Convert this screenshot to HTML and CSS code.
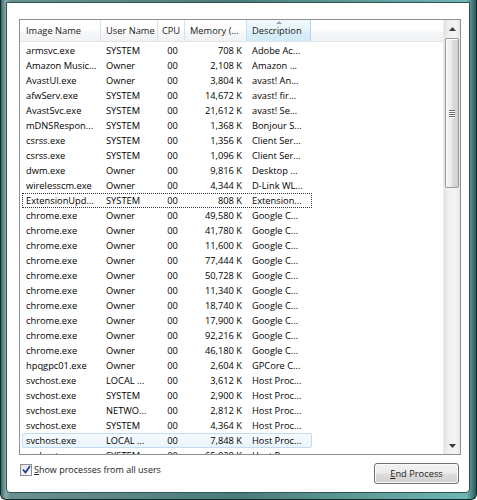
FILE: index.html
```html
<!DOCTYPE html>
<html>
<head>
<meta charset="utf-8">
<link rel="stylesheet" href="styles.css">
</head>
<body>
<div class="frame">
  <div class="client">
    <div class="listbox">
      <div class="list-main">
        <div class="header">
          <div class="hcell c1">Image Name</div>
          <div class="hcell c2">User Name</div>
          <div class="hcell c3">CPU</div>
          <div class="hcell c4">Memory (...</div>
          <div class="hcell c5 sorted"><span class="sort-arrow"></span>Description</div>
          <div class="hcell rest"></div>
        </div>
        <div class="rows">
          <div class="row"><span class="c1">armsvc.exe</span><span class="c2">SYSTEM</span><span class="c3">00</span><span class="c4">708 K</span><span class="c5">Adobe Ac...</span></div>
          <div class="row"><span class="c1">Amazon Music...</span><span class="c2">Owner</span><span class="c3">00</span><span class="c4">2,108 K</span><span class="c5">Amazon ...</span></div>
          <div class="row"><span class="c1">AvastUI.exe</span><span class="c2">Owner</span><span class="c3">00</span><span class="c4">3,804 K</span><span class="c5">avast! An...</span></div>
          <div class="row"><span class="c1">afwServ.exe</span><span class="c2">SYSTEM</span><span class="c3">00</span><span class="c4">14,672 K</span><span class="c5">avast! fir...</span></div>
          <div class="row"><span class="c1">AvastSvc.exe</span><span class="c2">SYSTEM</span><span class="c3">00</span><span class="c4">21,612 K</span><span class="c5">avast! Se...</span></div>
          <div class="row"><span class="c1">mDNSRespon...</span><span class="c2">SYSTEM</span><span class="c3">00</span><span class="c4">1,368 K</span><span class="c5">Bonjour S...</span></div>
          <div class="row"><span class="c1">csrss.exe</span><span class="c2">SYSTEM</span><span class="c3">00</span><span class="c4">1,356 K</span><span class="c5">Client Ser...</span></div>
          <div class="row"><span class="c1">csrss.exe</span><span class="c2">SYSTEM</span><span class="c3">00</span><span class="c4">1,096 K</span><span class="c5">Client Ser...</span></div>
          <div class="row"><span class="c1">dwm.exe</span><span class="c2">Owner</span><span class="c3">00</span><span class="c4">9,816 K</span><span class="c5">Desktop ...</span></div>
          <div class="row"><span class="c1">wirelesscm.exe</span><span class="c2">Owner</span><span class="c3">00</span><span class="c4">4,344 K</span><span class="c5">D-Link WL...</span></div>
          <div class="row focused"><span class="c1">ExtensionUpd...</span><span class="c2">SYSTEM</span><span class="c3">00</span><span class="c4">808 K</span><span class="c5">Extension...</span></div>
          <div class="row"><span class="c1">chrome.exe</span><span class="c2">Owner</span><span class="c3">00</span><span class="c4">49,580 K</span><span class="c5">Google C...</span></div>
          <div class="row"><span class="c1">chrome.exe</span><span class="c2">Owner</span><span class="c3">00</span><span class="c4">41,780 K</span><span class="c5">Google C...</span></div>
          <div class="row"><span class="c1">chrome.exe</span><span class="c2">Owner</span><span class="c3">00</span><span class="c4">11,600 K</span><span class="c5">Google C...</span></div>
          <div class="row"><span class="c1">chrome.exe</span><span class="c2">Owner</span><span class="c3">00</span><span class="c4">77,444 K</span><span class="c5">Google C...</span></div>
          <div class="row"><span class="c1">chrome.exe</span><span class="c2">Owner</span><span class="c3">00</span><span class="c4">50,728 K</span><span class="c5">Google C...</span></div>
          <div class="row"><span class="c1">chrome.exe</span><span class="c2">Owner</span><span class="c3">00</span><span class="c4">11,340 K</span><span class="c5">Google C...</span></div>
          <div class="row"><span class="c1">chrome.exe</span><span class="c2">Owner</span><span class="c3">00</span><span class="c4">18,740 K</span><span class="c5">Google C...</span></div>
          <div class="row"><span class="c1">chrome.exe</span><span class="c2">Owner</span><span class="c3">00</span><span class="c4">17,900 K</span><span class="c5">Google C...</span></div>
          <div class="row"><span class="c1">chrome.exe</span><span class="c2">Owner</span><span class="c3">00</span><span class="c4">92,216 K</span><span class="c5">Google C...</span></div>
          <div class="row"><span class="c1">chrome.exe</span><span class="c2">Owner</span><span class="c3">00</span><span class="c4">46,180 K</span><span class="c5">Google C...</span></div>
          <div class="row"><span class="c1">hpqgpc01.exe</span><span class="c2">Owner</span><span class="c3">00</span><span class="c4">2,604 K</span><span class="c5">GPCore C...</span></div>
          <div class="row"><span class="c1">svchost.exe</span><span class="c2">LOCAL ...</span><span class="c3">00</span><span class="c4">3,612 K</span><span class="c5">Host Proc...</span></div>
          <div class="row"><span class="c1">svchost.exe</span><span class="c2">SYSTEM</span><span class="c3">00</span><span class="c4">2,900 K</span><span class="c5">Host Proc...</span></div>
          <div class="row"><span class="c1">svchost.exe</span><span class="c2">NETWO...</span><span class="c3">00</span><span class="c4">2,812 K</span><span class="c5">Host Proc...</span></div>
          <div class="row"><span class="c1">svchost.exe</span><span class="c2">SYSTEM</span><span class="c3">00</span><span class="c4">4,364 K</span><span class="c5">Host Proc...</span></div>
          <div class="row hover"><span class="c1">svchost.exe</span><span class="c2">LOCAL ...</span><span class="c3">00</span><span class="c4">7,848 K</span><span class="c5">Host Proc...</span></div>
          <div class="row"><span class="c1">svchost.exe</span><span class="c2">SYSTEM</span><span class="c3">00</span><span class="c4">65,028 K</span><span class="c5">Host Proc...</span></div>
        </div>
      </div>
      <div class="scrollbar">
        <div class="sb-btn"><svg width="7" height="4" viewBox="0 0 7 4"><path d="M0 4 L3.5 0 L7 4 Z" fill="#3c3c3c"/></svg></div>
        <div class="sb-track">
          <div class="sb-thumb"><span class="grip"></span><span class="grip"></span><span class="grip"></span><span class="grip"></span></div>
        </div>
        <div class="sb-btn"><svg width="7" height="4" viewBox="0 0 7 4"><path d="M0 0 L3.5 4 L7 0 Z" fill="#3c3c3c"/></svg></div>
      </div>
    </div>
    <div class="bottom">
      <label class="check"><span class="box"><svg width="9" height="9" viewBox="0 0 9 9"><path d="M1 4.5 L3.5 7.5 L8 1" fill="none" stroke="#2a3f8c" stroke-width="1.8"/></svg></span><span><u>S</u>how processes from all users</span></label>
      <button class="btn"><u>E</u>nd Process</button>
    </div>
  </div>
</div>
</body>
</html>
```

FILE: styles.css
```css
* { box-sizing: border-box; }
html, body { margin: 0; padding: 0; }
body {
  width: 477px;
  height: 500px;
  overflow: hidden;
  font-family: "Open Sans", "Noto Sans", sans-serif;
  font-size: 9.3px;
  color: #000;
}
.frame {
  width: 477px;
  height: 500px;
  padding: 2px 6px 6px 5px;
  border: 1px solid #0e2a2c;
  border-top: none;
  background: linear-gradient(90deg, #3e6a6c 0%, #8aa9a8 1%, #6a8f8f 2%, #4a7b7a 50%, #6fb6b0 98%, #2b5a5c 100%);
  border-radius: 0 0 6px 6px;
}
.client {
  height: 100%;
  background: #fff;
  border: 1px solid #2d5355;
  border-radius: 0 0 4px 4px;
  padding: 16px 8px 0 12px;
}
.listbox {
  display: flex;
  width: 442px;
  height: 436px;
  border: 1px solid #8a9093;
  background: #fff;
}
.list-main {
  flex: 1;
  overflow: hidden;
  display: flex;
  flex-direction: column;
}
.header {
  display: flex;
  height: 22px;
  background: linear-gradient(#ffffff 0%, #ffffff 45%, #f5f6f7 60%, #f1f2f4 100%);
  border-bottom: 1px solid #e3e5e8;
  flex: none;
}
.hcell {
  position: relative;
  border-right: 1px solid #dde0e4;
  line-height: 21px;
  padding-left: 5px;
  white-space: nowrap;
  overflow: hidden;
  color: #1a1a1a;
}
.hcell.rest { flex: 1; border-right: none; }
.hcell.sorted {
  background: linear-gradient(#f2f9fc 0%, #e6f4fb 45%, #d8eef9 60%, #d3ebf8 100%);
  border-right: 1px solid #a9d8f3;
  border-left: 1px solid #c2e4f6;
  margin-left: -1px;
}
.sort-arrow {
  position: absolute;
  left: 29px;
  top: 1px;
  width: 0;
  height: 0;
  border-left: 3px solid transparent;
  border-right: 3px solid transparent;
  border-bottom: 3px solid #97a5b8;
}
.c1 { width: 81px; }
.c2 { width: 57px; }
.c3 { width: 27px; }
.c4 { width: 62px; }
.c5 { width: 65px; }
.hcell.c1 { padding-left: 6px; }
.hcell.c3 { text-align: center; padding-left: 0; }
.rows { padding-top: 1px; }
.row {
  display: flex;
  height: 15px;
  line-height: 13px;
  width: 290px;
  margin-left: 2px;
  border: 1px solid transparent;
  white-space: nowrap;
}
.row span { overflow: hidden; }
.row .c1 { width: 79px; padding-left: 3px; }
.row .c2 { padding-left: 4px; }
.row .c3 { text-align: center; }
.row .c4 { text-align: right; padding-right: 6px; }
.row .c5 { padding-left: 4px; width: 63px; }
.row.focused {
  border: 1px dotted #333;
}
.row.hover {
  background: linear-gradient(#f7fbfe, #e9f4fd);
  border: 1px solid #c2dcf5;
  border-radius: 2px;
}
.scrollbar {
  width: 17px;
  flex: none;
  display: flex;
  flex-direction: column;
  background: linear-gradient(90deg, #e2e2e2, #f0f0f0 30%, #f4f4f4 70%, #e6e6e6);
  border-left: 1px solid #ececec;
}
.sb-btn {
  height: 17px;
  display: flex;
  align-items: center;
  justify-content: center;
  flex: none;
}
.sb-track {
  flex: 1;
  padding-top: 1px;
}
.sb-thumb {
  height: 150px;
  margin: 0 1px;
  border: 1px solid #9b9b9b;
  border-radius: 2px;
  background: linear-gradient(90deg, #f3f3f3, #ececec 45%, #dbdbdb 55%, #d0d0d0);
  box-shadow: inset 1px 1px 0 #fff;
  display: flex;
  flex-direction: column;
  justify-content: center;
  align-items: center;
  gap: 1px;
}
.grip {
  width: 6px;
  height: 1px;
  background: #6e6e6e;
  box-shadow: 0 1px 0 #fff;
}
.bottom {
  display: flex;
  justify-content: space-between;
  align-items: flex-start;
  padding: 7px 0 0 1px;
}
.check {
  display: flex;
  align-items: center;
  gap: 2px;
  margin-top: 1px;
  font-size: 9px;
  color: #1b1b1b;
}
.box {
  width: 12px;
  height: 12px;
  border: 1px solid #8f8f8f;
  background: linear-gradient(135deg, #dfe3ee, #ffffff);
  display: flex;
  align-items: center;
  justify-content: center;
}
.btn {
  width: 85px;
  height: 21px;
  margin-top: 1px;
  margin-right: 2px;
  border: 1px solid #707070;
  border-radius: 3px;
  background: linear-gradient(#f2f2f2 0%, #ebebeb 48%, #dddddd 52%, #cfcfcf 100%);
  box-shadow: inset 0 0 0 1px #fbfbfb;
  font-family: inherit;
  font-size: 9.3px;
  color: #1b1b1b;
  padding: 0;
}
u { text-decoration: underline; text-underline-offset: 1px; }
```
